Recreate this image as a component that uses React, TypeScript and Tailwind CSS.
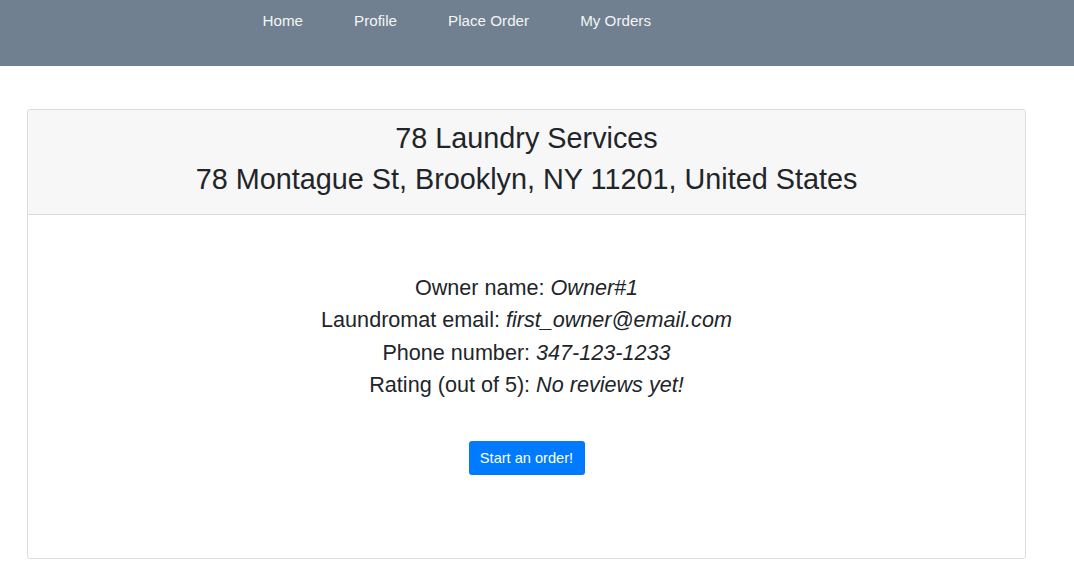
export default function App() {
  const font = { fontFamily: '"Liberation Sans", Arial, sans-serif' };
  return (
    <div className="min-h-screen bg-white text-[#212529]" style={font}>
      <nav className="h-[66px] bg-[#708090] flex items-start pl-[237px]">
        {["Home", "Profile", "Place Order", "My Orders"].map((t) => (
          <a key={t} className="px-[25.5px] pt-[11px] text-[15.2px] leading-[20px] text-[#f4f4f4]">
            {t}
          </a>
        ))}
      </nav>
      <div className="px-[27px] pt-[43px]">
        <div className="w-[999px] border border-[#dcdcdc] rounded-[3px] overflow-hidden">
          <div className="bg-[#f7f7f7] border-b border-[#dcdcdc] pt-[11px] pb-[18px] text-center text-[28.8px] leading-[34px]">
            <div className="mb-[7px]">78 Laundry Services</div>
            <div>78 Montague St, Brooklyn, NY 11201, United States</div>
          </div>
          <div className="h-[343px] flex flex-col items-center pt-[57px] text-[21.6px] leading-[32.33px] text-center">
            <div>Owner name: <i>Owner#1</i></div>
            <div>Laundromat email: <i>first_owner@email.com</i></div>
            <div>Phone number: <i>347-123-1233</i></div>
            <div>Rating (out of 5): <i>No reviews yet!</i></div>
            <button className="mt-[40px] h-[34px] w-[116px] rounded-[3px] bg-[#007bff] text-white text-[14.6px]">
              Start an order!
            </button>
          </div>
        </div>
      </div>
    </div>
  );
}
